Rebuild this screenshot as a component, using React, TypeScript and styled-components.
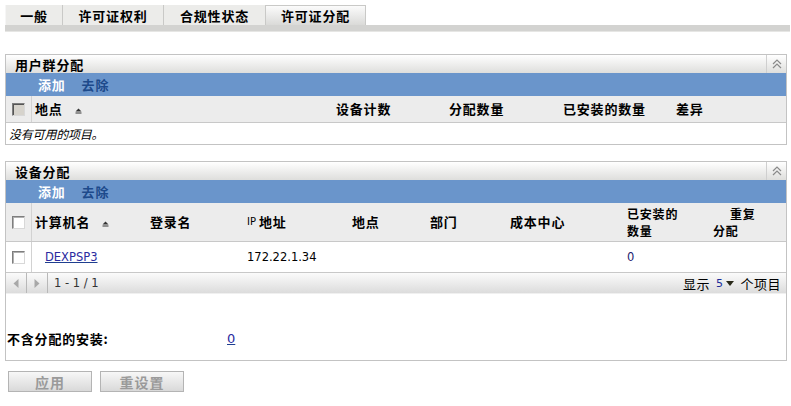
import React from 'react'
import styled, { createGlobalStyle } from 'styled-components'

const GlobalStyle = createGlobalStyle`
  body {
    margin: 0;
    background: #fff;
    font-family: "Noto Sans CJK SC", "DejaVu Sans", sans-serif;
    font-size: 13px;
    color: #000;
  }
`

const LATIN = `"DejaVu Sans", "Noto Sans CJK SC", sans-serif`

const Page = styled.div`
  padding: 5px 0 0 5px;
  width: 782px;
`

/* ---- tabs ---- */

const TabBar = styled.div`
  width: 785px;
`

const TabRow = styled.div`
  display: flex;
  height: 20px;
`

const Tab = styled.div<{ $w: number; $active?: boolean }>`
  width: ${p => p.$w}px;
  box-sizing: border-box;
  display: flex;
  align-items: center;
  justify-content: center;
  font-weight: 700;
  letter-spacing: 0.8px;
  line-height: 1;
  border-right: 1px solid #c9c9c7;
  border-top: ${p => (p.$active ? '1px solid #c9c9c7' : 'none')};
  background: ${p => (p.$active ? 'linear-gradient(#fbfbfb, #dadad8)' : '#ececea')};
  &:first-child {
    border-left: 1px solid #f6f6f6;
  }
`

const TabStrip = styled.div`
  height: 7px;
  background: #d3d3d1;
  border-bottom: 1px solid #e6e6e4;
  box-sizing: border-box;
`

/* ---- panels ---- */

const Panel = styled.section<{ $mt: number }>`
  margin-top: ${p => p.$mt}px;
  border: 1px solid #c3c3c3;
  background: #fff;
`

const PanelHeader = styled.div`
  height: 18px;
  display: flex;
  align-items: center;
  background: linear-gradient(#ffffff, #dededc);
`

const PanelTitle = styled.div`
  flex: 1;
  padding-left: 9px;
  font-weight: 700;
  letter-spacing: 0.8px;
  line-height: 1;
`

const Collapse = styled.div`
  width: 19px;
  height: 18px;
  border-left: 1px solid #cfcfcf;
  display: flex;
  align-items: center;
  justify-content: center;
`

const Toolbar = styled.div`
  height: 23px;
  background: #6a95cb;
  display: flex;
  align-items: center;
  gap: 16px;
  padding-left: 32px;
`

const ToolButton = styled.span<{ $primary?: boolean }>`
  font-weight: 700;
  letter-spacing: 0.8px;
  color: ${p => (p.$primary ? '#ffffff' : '#1d4a8b')};
`

const GridRow = styled.div<{ $cols: string; $h: number; $head?: boolean }>`
  display: grid;
  grid-template-columns: ${p => p.$cols};
  height: ${p => p.$h}px;
  background: ${p => (p.$head ? '#ececec' : '#fff')};
  border-bottom: 1px solid #c8c8c8;
`

const CheckCell = styled.div`
  border-right: 1px solid #d2d2d2;
  display: flex;
  justify-content: center;
  align-items: center;
  padding-right: 1px;
`

const HeadCell = styled.div`
  padding-left: 3px;
  display: flex;
  align-items: center;
  font-weight: 700;
  letter-spacing: 0.8px;
  line-height: 14px;
  white-space: nowrap;
`

const TwoLine = styled.div<{ $indent?: number }>`
  font-size: 12px;
  line-height: 17.5px;
  text-indent: ${p => p.$indent ?? 0}px;
`

const IpTag = styled.span`
  font-family: ${LATIN};
  font-weight: 400;
  font-size: 10px;
  letter-spacing: 0;
  margin-right: 3px;
`

const Cell = styled.div`
  padding-left: 3px;
  display: flex;
  align-items: center;
  font-family: ${LATIN};
  font-size: 11.5px;
`

const Check = styled.span<{ $disabled?: boolean }>`
  display: inline-block;
  width: 11px;
  height: 11px;
  border: 1px solid;
  border-color: #7e7e7e #d8d8d8 #d8d8d8 #7e7e7e;
  background: ${p => (p.$disabled ? '#d6d3cc' : '#fff')};
  box-shadow: ${p => (p.$disabled ? 'inset 1px 1px 0 #555' : 'inset 1px 1px 0 #b0b0b0')};
`

const SortMark = styled.svg`
  margin-left: 12px;
  margin-top: 3px;
  flex: none;
`

const Empty = styled.div`
  height: 21px;
  display: flex;
  align-items: center;
  padding-left: 3px;
  font-style: italic;
  font-size: 12px;
  letter-spacing: -0.2px;
`

const Link = styled.a<{ $indent?: number }>`
  color: #2b2ba0;
  text-decoration: underline;
  text-decoration-color: #1f3f8f;
  margin-left: ${p => p.$indent ?? 0}px;
  font-family: ${LATIN};
`

const Plain = styled.span`
  color: #1c1c70;
`

/* ---- pager ---- */

const Pager = styled.div`
  height: 20px;
  display: flex;
  align-items: center;
  background: linear-gradient(#fbfbfb, #dcdcdc);
  border-bottom: 1px solid #f0f0f0;
`

const PagerArrow = styled.div`
  width: 20px;
  height: 20px;
  border-right: 1px solid #b8b8b8;
  display: flex;
  align-items: center;
  justify-content: center;
`

const PagerText = styled.span`
  margin-left: 6px;
  font-family: ${LATIN};
  font-size: 11.5px;
  color: #333;
`

const PagerRight = styled.div`
  margin-left: auto;
  padding-right: 5px;
  display: flex;
  align-items: center;
  gap: 4px;
  font-size: 13px;
  letter-spacing: 0.5px;
`

const PageSize = styled.span`
  display: inline-flex;
  align-items: center;
  gap: 3px;
  margin: 0 2px;
  font-family: ${LATIN};
  font-size: 11px;
  color: #1b2d9a;
`

const Footer = styled.div`
  height: 66px;
  display: flex;
  align-items: center;
  padding: 22px 0 0 1px;
  box-sizing: border-box;
`

const FooterLabel = styled.span`
  width: 220px;
  font-weight: 700;
  letter-spacing: 0.8px;
`

/* ---- buttons ---- */

const Actions = styled.div`
  display: flex;
  gap: 8px;
  margin: 10px 0 0 3px;
`

const Button = styled.button`
  width: 84px;
  height: 21px;
  border: 1px solid #b4b4b4;
  background: linear-gradient(#f7f7f7, #d9d9d9);
  font-family: "Noto Sans CJK SC", sans-serif;
  font-size: 14px;
  font-weight: 700;
  letter-spacing: 1px;
  color: #9a9a9a;
  padding: 0;
  line-height: 1;
`

const CollapseIcon = () => (
  <svg width="12" height="10" viewBox="0 0 12 10">
    <path d="M2 5 L6 1 L10 5 M2 9 L6 5 L10 9" fill="none" stroke="#8a8a8a" strokeWidth="1.2" />
  </svg>
)

const SortIcon = () => (
  <SortMark width="7" height="6" viewBox="0 0 7 6">
    <path d="M0.5 3.5 L3.5 0.5 L6.5 3.5 Z" fill="#333" />
    <rect x="0.5" y="4.5" width="6" height="1" fill="#333" />
  </SortMark>
)

const USER_COLS = '26px 301px 113px 114px 113px 1fr'
const DEV_COLS = '26px 115px 97px 105px 78px 80px 117px 86px 1fr'

export default function App() {
  return (
    <Page>
      <GlobalStyle />
      <TabBar>
        <TabRow>
          <Tab $w={58}>一般</Tab>
          <Tab $w={101}>许可证权利</Tab>
          <Tab $w={102}>合规性状态</Tab>
          <Tab $w={100} $active>许可证分配</Tab>
        </TabRow>
        <TabStrip />
      </TabBar>

      <Panel $mt={22}>
        <PanelHeader>
          <PanelTitle>用户群分配</PanelTitle>
          <Collapse><CollapseIcon /></Collapse>
        </PanelHeader>
        <Toolbar>
          <ToolButton $primary>添加</ToolButton>
          <ToolButton>去除</ToolButton>
        </Toolbar>
        <GridRow $cols={USER_COLS} $h={26} $head>
          <CheckCell><Check $disabled /></CheckCell>
          <HeadCell>地点<SortIcon /></HeadCell>
          <HeadCell>设备计数</HeadCell>
          <HeadCell>分配数量</HeadCell>
          <HeadCell>已安装的数量</HeadCell>
          <HeadCell>差异</HeadCell>
        </GridRow>
        <Empty>没有可用的项目。</Empty>
      </Panel>

      <Panel $mt={16}>
        <PanelHeader>
          <PanelTitle>设备分配</PanelTitle>
          <Collapse><CollapseIcon /></Collapse>
        </PanelHeader>
        <Toolbar>
          <ToolButton $primary>添加</ToolButton>
          <ToolButton>去除</ToolButton>
        </Toolbar>
        <GridRow $cols={DEV_COLS} $h={38} $head>
          <CheckCell><Check /></CheckCell>
          <HeadCell>计算机名<SortIcon /></HeadCell>
          <HeadCell>登录名</HeadCell>
          <HeadCell><IpTag>IP</IpTag>地址</HeadCell>
          <HeadCell>地点</HeadCell>
          <HeadCell>部门</HeadCell>
          <HeadCell>成本中心</HeadCell>
          <HeadCell>
            <TwoLine>已安装的<br />数量</TwoLine>
          </HeadCell>
          <HeadCell>
            <TwoLine $indent={17}>重复<br />分配</TwoLine>
          </HeadCell>
        </GridRow>
        <GridRow $cols={DEV_COLS} $h={30}>
          <CheckCell><Check /></CheckCell>
          <Cell><Link $indent={10}>DEXPSP3</Link></Cell>
          <Cell />
          <Cell>172.22.1.34</Cell>
          <Cell />
          <Cell />
          <Cell />
          <Cell><Plain>0</Plain></Cell>
          <Cell />
        </GridRow>
        <Pager>
          <PagerArrow>
            <svg width="6" height="9" viewBox="0 0 6 9"><path d="M5.5 0 L0.5 4.5 L5.5 9 Z" fill="#a8a8a8" /></svg>
          </PagerArrow>
          <PagerArrow>
            <svg width="6" height="9" viewBox="0 0 6 9"><path d="M0.5 0 L5.5 4.5 L0.5 9 Z" fill="#a8a8a8" /></svg>
          </PagerArrow>
          <PagerText>1 - 1 / 1</PagerText>
          <PagerRight>
            <span>显示</span>
            <PageSize>
              5
              <svg width="8" height="5" viewBox="0 0 8 5"><path d="M0 0 L8 0 L4 5 Z" fill="#2a2a1a" /></svg>
            </PageSize>
            <span>个项目</span>
          </PagerRight>
        </Pager>
        <Footer>
          <FooterLabel>不含分配的安装:</FooterLabel>
          <Link>0</Link>
        </Footer>
      </Panel>

      <Actions>
        <Button>应用</Button>
        <Button>重设置</Button>
      </Actions>
    </Page>
  )
}
